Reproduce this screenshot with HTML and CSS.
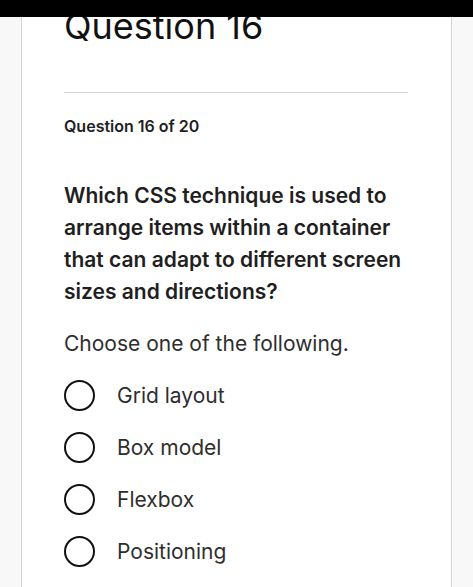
FILE: index.html
```html
<!DOCTYPE html>
<html lang="en">
<head>
  <meta charset="UTF-8" />
  <meta name="viewport" content="width=device-width, initial-scale=1.0"/>
  <title>Question 16</title>
  <link rel="stylesheet" href="styles.css">
</head>
<body>
  <div class="topbar"></div>

  <main class="card">
    <h1>Question 16</h1>
    <hr class="divider">

    <p class="progress">Question 16 of 20</p>

    <p class="question">Which CSS technique is used to arrange items within a container that can adapt to different screen sizes and directions?</p>

    <p class="hint">Choose one of the following.</p>

    <ul class="options">
      <li class="option"><span class="radio"></span>Grid layout</li>
      <li class="option"><span class="radio"></span>Box model</li>
      <li class="option"><span class="radio"></span>Flexbox</li>
      <li class="option"><span class="radio"></span>Positioning</li>
    </ul>
  </main>
</body>
</html>
```

FILE: styles.css
```css
:root {
  --text:      #1f1f1f;
  --text-soft: #2e2e2e;
  --line:      #d4d4d4;
  --page:      #f8f8f8;
}

* { box-sizing: border-box; margin: 0; padding: 0; }
html, body { height: 100%; font-family: Inter, "Noto Sans", sans-serif; }

body {
  background: var(--page);
  color: var(--text);
  overflow: hidden;
}

/* barra preta do topo (fica por cima do título) */
.topbar {
  position: fixed;
  top: 0;
  left: 0;
  right: 0;
  height: 17px;
  background: #000;
  z-index: 2;
}

.card {
  width: 431px;
  min-height: 100%;
  margin-left: 21px;
  padding: 6px 43px 0 42px;
  background: #fff;
  border-left: 1px solid var(--line);
  border-right: 1px solid var(--line);
}

.card h1 {
  font-size: 36px;
  line-height: 40px;
  font-weight: 400;
  color: #111;
}

.divider {
  margin-top: 46px;
  border: none;
  border-top: 1px solid var(--line);
}

.progress {
  margin-top: 23px;
  font-size: 16px;
  line-height: 20px;
  font-weight: 600;
}

.question {
  margin-top: 44px;
  font-size: 21px;
  line-height: 32px;
  font-weight: 600;
}

.hint {
  margin-top: 21px;
  font-size: 21px;
  line-height: 30px;
  color: var(--text-soft);
}

.options {
  list-style: none;
  margin-top: 10px;
}

.option {
  display: flex;
  align-items: center;
  gap: 22px;
  height: 52px;
  font-size: 21px;
  color: var(--text-soft);
}

.radio {
  width: 31px;
  height: 31px;
  border: 2.5px solid #111;
  border-radius: 50%;
  flex-shrink: 0;
}
```
